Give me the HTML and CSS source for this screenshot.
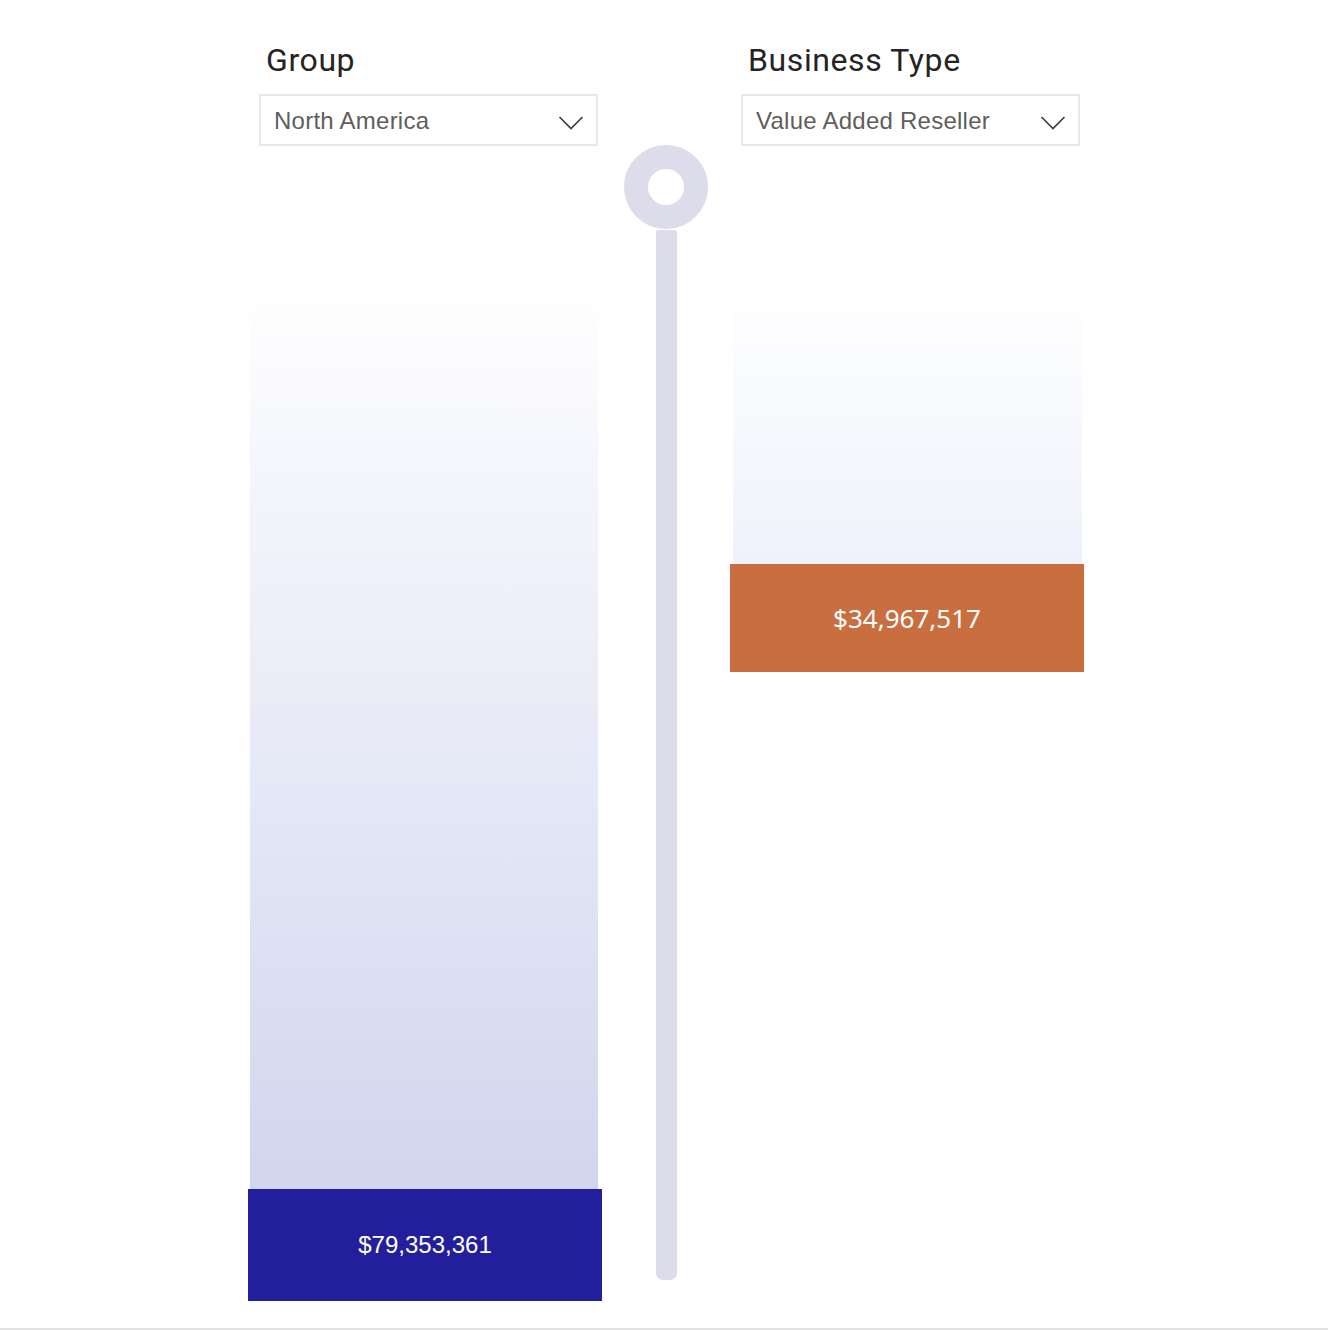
FILE: index.html
```html
<!DOCTYPE html>
<html>
<head>
<meta charset="utf-8">
<link rel="stylesheet" href="styles.css">
</head>
<body>
<div class="page">
  <div class="col">
    <div class="title">Group</div>
    <div class="dropdown">
      <span class="dd-text">North America</span>
      <svg class="chev" width="26" height="15" viewBox="0 0 26 15"><polyline points="1.5,2 13,13.5 24.5,2" fill="none" stroke="#3b3a39" stroke-width="1.6"/></svg>
    </div>
    <div class="chart chart-left">
      <div class="bar bar-left"></div>
      <div class="box box-blue">$79,353,361</div>
    </div>
  </div>
  <div class="slider">
    <div class="ring"></div>
    <div class="stick"></div>
  </div>
  <div class="col">
    <div class="title">Business Type</div>
    <div class="dropdown">
      <span class="dd-text">Value Added Reseller</span>
      <svg class="chev" width="26" height="15" viewBox="0 0 26 15"><polyline points="1.5,2 13,13.5 24.5,2" fill="none" stroke="#3b3a39" stroke-width="1.6"/></svg>
    </div>
    <div class="chart chart-right">
      <div class="bar bar-right"></div>
      <div class="box box-orange">$34,967,517</div>
    </div>
  </div>
</div>
</body>
</html>
```
FILE: styles.css
```css
html, body {
  margin: 0;
  padding: 0;
  background: #ffffff;
}
.page {
  width: 1328px;
  height: 1330px;
  box-sizing: border-box;
  border-bottom: 2px solid #e1e1e1;
  display: flex;
  align-items: flex-start;
  padding-left: 248px;
  gap: 21px;
}
.col {
  width: 354px;
  display: flex;
  flex-direction: column;
  padding-top: 40px;
}
.title {
  font-family: Roboto, "Liberation Sans", sans-serif;
  font-size: 32px;
  line-height: 40px;
  height: 40px;
  letter-spacing: 0.6px;
  color: #252423;
  padding-left: 18px;
  margin-bottom: 14px;
}
.dropdown {
  margin-left: 11px;
  width: 339px;
  height: 52px;
  box-sizing: border-box;
  border: 2px solid #e8e8e8;
  display: flex;
  align-items: center;
  justify-content: space-between;
  padding: 0 12px 0 13px;
}
.dd-text {
  font-family: "Liberation Sans", Arial, sans-serif;
  font-size: 24px;
  letter-spacing: 0.25px;
  color: #5f5e5c;
  line-height: 28px;
  margin-top: 2px;
}
.chev {
  display: block;
  margin-top: 5px;
}
.chart {
  margin-top: 139px;
  display: flex;
  flex-direction: column;
}
.bar-left {
  height: 904px;
  margin: 0 4px 0 2px;
  background: linear-gradient(to bottom, #ffffff 0%, #f5f6fc 20%, #d1d6ee 100%);
}
.bar-right {
  height: 279px;
  margin: 0 2px 0 3px;
  background: linear-gradient(to bottom, #ffffff 0%, #eff2fb 100%);
}
.box {
  display: flex;
  align-items: center;
  justify-content: center;
  color: #ffffff;
}
.box-blue {
  height: 112px;
  background: #231e9b;
  font-family: "Liberation Sans", Arial, sans-serif;
  font-size: 24px;
}
.box-orange {
  height: 108px;
  background: #c96e3f;
  font-family: "Noto Sans", "Open Sans", sans-serif;
  font-size: 26px;
}
.slider {
  width: 86px;
  display: flex;
  flex-direction: column;
  align-items: center;
  padding-top: 145px;
}
.ring {
  width: 84px;
  height: 84px;
  box-sizing: border-box;
  border: 24px solid #dddcea;
  border-radius: 50%;
}
.stick {
  width: 21px;
  height: 1050px;
  margin-top: 1px;
  background: #dddcea;
  border-radius: 2px 2px 7px 7px;
}
```
